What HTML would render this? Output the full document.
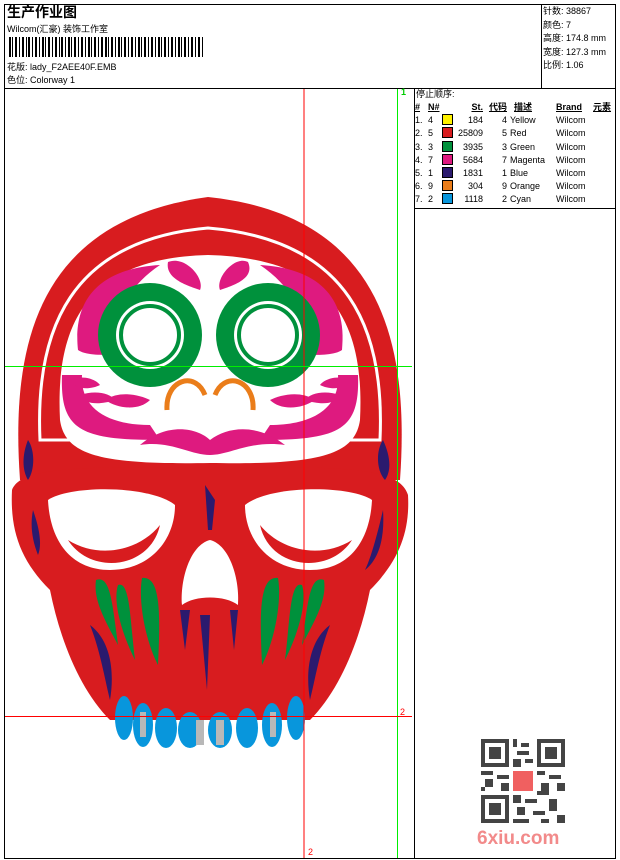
<!DOCTYPE html>
<html><head><meta charset="utf-8"><style>
body{margin:0;width:620px;height:860px;background:#fff;position:relative;font-family:"Liberation Sans","Noto Sans CJK SC",sans-serif;font-size:9px;color:#000;overflow:hidden}
.a{position:absolute}
.b{position:absolute;background:#000}
.t{position:absolute;white-space:nowrap;line-height:12px}
table{border-collapse:collapse;font-size:9px;table-layout:fixed}
td{padding:0;height:13.2px;line-height:13px;white-space:nowrap;overflow:visible}
.sw{display:inline-block;width:9px;height:9px;border:1px solid #000;vertical-align:-2px}
.r{text-align:right}
</style></head><body>
<div class="b" style="left:4px;top:4px;width:612px;height:1px"></div>
<div class="b" style="left:4px;top:858px;width:612px;height:1px"></div>
<div class="b" style="left:4px;top:4px;width:1px;height:855px"></div>
<div class="b" style="left:615px;top:4px;width:1px;height:855px"></div>
<div class="b" style="left:4px;top:88px;width:612px;height:1px"></div>
<div class="b" style="left:541px;top:4px;width:1px;height:84px"></div>
<div class="b" style="left:414px;top:88px;width:1px;height:771px"></div>
<div class="b" style="left:414px;top:208px;width:202px;height:1px"></div>
<div class="t" style="left:7px;top:4px;font-size:14px;font-weight:bold;line-height:16px">生产作业图</div>
<div class="t" style="left:7px;top:23px">Wilcom(汇豪) 装饰工作室</div>
<svg class="a" style="left:9px;top:37px" width="196" height="20">
<g fill="#000">
<rect x="0" width="2" height="20"/><rect x="3" width="1" height="20"/><rect x="6" width="2" height="20"/><rect x="10" width="1" height="20"/><rect x="13" width="2" height="20"/><rect x="17" width="1" height="20"/><rect x="19" width="2" height="20"/><rect x="23" width="1" height="20"/><rect x="26" width="2" height="20"/><rect x="30" width="1" height="20"/><rect x="33" width="2" height="20"/><rect x="36" width="1" height="20"/><rect x="39" width="2" height="20"/><rect x="43" width="1" height="20"/><rect x="46" width="2" height="20"/><rect x="50" width="1" height="20"/><rect x="52" width="2" height="20"/><rect x="56" width="1" height="20"/><rect x="59" width="2" height="20"/><rect x="62" width="1" height="20"/><rect x="65" width="2" height="20"/><rect x="69" width="1" height="20"/><rect x="72" width="2" height="20"/><rect x="76" width="1" height="20"/><rect x="79" width="2" height="20"/><rect x="82" width="1" height="20"/><rect x="85" width="2" height="20"/><rect x="89" width="1" height="20"/><rect x="92" width="2" height="20"/><rect x="96" width="2" height="20"/><rect x="99" width="1" height="20"/><rect x="102" width="2" height="20"/><rect x="106" width="1" height="20"/><rect x="109" width="2" height="20"/><rect x="112" width="1" height="20"/><rect x="115" width="2" height="20"/><rect x="119" width="1" height="20"/><rect x="122" width="2" height="20"/><rect x="126" width="1" height="20"/><rect x="129" width="2" height="20"/><rect x="132" width="1" height="20"/><rect x="135" width="2" height="20"/><rect x="139" width="1" height="20"/><rect x="142" width="2" height="20"/><rect x="146" width="1" height="20"/><rect x="149" width="2" height="20"/><rect x="152" width="1" height="20"/><rect x="155" width="2" height="20"/><rect x="159" width="1" height="20"/><rect x="162" width="2" height="20"/><rect x="166" width="1" height="20"/><rect x="169" width="2" height="20"/><rect x="172" width="1" height="20"/><rect x="175" width="2" height="20"/><rect x="179" width="1" height="20"/><rect x="182" width="2" height="20"/><rect x="186" width="1" height="20"/><rect x="189" width="2" height="20"/><rect x="193" width="1" height="20"/>
</g></svg>
<div class="t" style="left:7px;top:61px">花版: lady_F2AEE40F.EMB</div>
<div class="t" style="left:7px;top:74px">色位: Colorway 1</div>
<div class="t" style="left:543px;top:5px;line-height:13.5px">针数: 38867<br>颜色: 7<br>高度: 174.8 mm<br>宽度: 127.3 mm<br>比例: 1.06</div>

<svg class="a" style="left:5px;top:89px" width="409" height="769" viewBox="5 89 409 769">
<path d="M20 480 C10 340 40 220 208 197 C380 215 410 340 400 480 Z" fill="#d81c1f"/>
<path d="M40 440 C35 330 70 240 208 228 C350 240 385 330 380 440 Z" fill="none" stroke="#fff" stroke-width="3"/>
<path d="M60 420 C55 320 90 258 208 255 C330 258 365 320 360 420 C355 455 320 465 210 463 C100 465 65 455 60 420 Z" fill="#fff"/>
<path d="M78 350 C72 295 105 268 160 265 C130 285 112 315 112 355 C100 355 85 355 78 350 Z" fill="#de1a7f"/>
<path d="M342 350 C348 295 315 268 260 265 C290 285 308 315 308 355 C320 355 335 355 342 350 Z" fill="#de1a7f"/>
<path d="M168 262 C185 255 205 278 200 290 C185 285 165 278 168 262Z" fill="#de1a7f"/>
<path d="M248 262 C235 255 215 278 220 290 C235 285 255 278 248 262Z" fill="#de1a7f"/>
<circle cx="150" cy="335" r="52" fill="#00913c"/><circle cx="150" cy="335" r="34" fill="#fff"/><circle cx="150" cy="335" r="29" fill="none" stroke="#00913c" stroke-width="4"/>
<circle cx="268" cy="335" r="52" fill="#00913c"/><circle cx="268" cy="335" r="34" fill="#fff"/><circle cx="268" cy="335" r="29" fill="none" stroke="#00913c" stroke-width="4"/>
<path d="M62 375 C60 430 80 440 160 440 L150 425 C110 425 80 410 82 375 Z" fill="#de1a7f"/>
<path d="M358 375 C360 430 340 440 260 440 L270 425 C310 425 340 410 338 375 Z" fill="#de1a7f"/>
<path d="M70 380 C80 375 95 378 100 385 C90 390 75 390 70 380Z M80 395 C95 390 110 393 115 400 C100 405 85 405 80 395Z" fill="#de1a7f"/>
<path d="M350 380 C340 375 325 378 320 385 C330 390 345 390 350 380Z M340 395 C325 390 310 393 305 400 C320 405 335 405 340 395Z" fill="#de1a7f"/>
<path d="M105 400 C120 390 140 395 150 400 C140 410 120 410 105 400Z" fill="#de1a7f"/>
<path d="M315 400 C300 390 280 395 270 400 C280 410 300 410 315 400Z" fill="#de1a7f"/>
<path d="M140 445 C170 420 200 430 210 440 C230 425 260 425 285 445 C250 440 230 455 210 455 C190 455 170 440 140 445Z" fill="#de1a7f"/>
<path d="M167 410 C165 380 195 370 205 395" fill="none" stroke="#ea7d1a" stroke-width="5"/>
<path d="M253 410 C255 380 225 370 215 395" fill="none" stroke="#ea7d1a" stroke-width="5"/>
<path d="M12 490 C20 470 60 465 210 468 C360 465 400 470 408 495 C410 530 400 560 370 590 C360 640 340 690 310 720 L110 720 C80 690 60 640 50 590 C20 560 10 530 12 490Z" fill="#d81c1f"/>
<path d="M48 500 C70 485 150 485 175 505 C175 540 150 570 110 570 C70 570 50 540 48 500Z" fill="#fff"/>
<path d="M372 500 C350 485 270 485 245 505 C245 540 270 570 310 570 C350 570 370 540 372 500Z" fill="#fff"/>
<path d="M68 540 C100 560 140 550 160 525 C150 570 90 575 68 540Z" fill="#d81c1f"/>
<path d="M352 540 C320 560 280 550 260 525 C270 570 330 575 352 540Z" fill="#d81c1f"/>
<path d="M210 540 C230 545 240 580 238 605 C225 595 195 595 182 605 C180 580 190 545 210 540Z" fill="#fff"/>
<path d="M28 440 C35 450 35 470 28 480 C22 470 22 455 28 440Z M33 510 C40 530 42 545 38 555 C32 540 30 525 33 510Z" fill="#2b1a6e"/>
<path d="M383 440 C376 450 376 470 385 480 C392 470 390 455 383 440Z M383 510 C376 540 370 560 365 570 C378 560 385 540 383 510Z" fill="#2b1a6e"/>
<path d="M90 625 C110 640 115 670 110 700 C105 680 100 650 90 625Z M330 625 C310 640 305 670 310 700 C315 680 320 650 330 625Z" fill="#2b1a6e"/>
<path d="M180 610 L190 610 L185 650Z M200 615 L210 615 L207 690Z M230 610 L238 610 L234 650Z" fill="#2b1a6e"/>
<path d="M205 485 L215 500 L212 530 L208 530Z" fill="#2b1a6e"/>
<path d="M96 580 C110 575 112 600 118 645 C105 620 93 600 96 580Z M118 585 C130 580 130 620 135 660 C120 630 113 600 118 585Z M142 578 C162 575 160 620 158 665 C145 640 138 600 142 578Z" fill="#00913c"/>
<path d="M324 580 C310 575 308 600 302 645 C315 620 327 600 324 580Z M302 585 C290 580 290 620 285 660 C300 630 307 600 302 585Z M278 578 C258 575 260 620 262 665 C275 640 282 600 278 578Z" fill="#00913c"/>
<g fill="#0896dc">
<ellipse cx="124" cy="718" rx="9" ry="22"/><ellipse cx="143" cy="725" rx="10" ry="22"/><ellipse cx="166" cy="728" rx="11" ry="20"/><ellipse cx="190" cy="730" rx="12" ry="18"/><ellipse cx="220" cy="730" rx="12" ry="18"/><ellipse cx="247" cy="728" rx="11" ry="20"/><ellipse cx="272" cy="725" rx="10" ry="22"/><ellipse cx="296" cy="718" rx="9" ry="22"/>
</g>
<g fill="#b8b8b8"><rect x="140" y="712" width="6" height="25"/><rect x="196" y="720" width="8" height="25"/><rect x="216" y="720" width="8" height="25"/><rect x="270" y="712" width="6" height="25"/></g>
<line x1="304" y1="89" x2="304" y2="858" stroke="#f00" stroke-width="1"/>
<line x1="397.5" y1="89" x2="397.5" y2="858" stroke="#0e0" stroke-width="1"/>
<line x1="5" y1="366.5" x2="412" y2="366.5" stroke="#0e0" stroke-width="1"/>
<line x1="5" y1="716.5" x2="412" y2="716.5" stroke="#f00" stroke-width="1"/>
</svg>
<div class="t" style="left:401px;top:86px;color:#0c0;font-size:9px;font-weight:bold">1</div>
<div class="t" style="left:400px;top:706px;color:#f00">2</div>
<div class="t" style="left:308px;top:846px;color:#f00">2</div>

<div class="t" style="left:416px;top:88px">停止顺序:</div>
<table class="a" style="left:415px;top:101px;width:215px">
<colgroup><col style="width:13px"><col style="width:14px"><col style="width:14px"><col style="width:27px"><col style="width:24px"><col style="width:49px"><col style="width:37px"><col style="width:37px"></colgroup>
<tr style="font-weight:bold;text-decoration:underline"><td>#</td><td>N#</td><td></td><td class="r">St.</td><td class="r">代码</td><td style="padding-left:7px">描述</td><td>Brand</td><td>元素</td></tr>
<tr><td>1.</td><td>4</td><td><span class="sw" style="background:#fff200"></span></td><td class="r">184</td><td class="r">4</td><td style="padding-left:3px">Yellow</td><td>Wilcom</td><td></td></tr>
<tr><td>2.</td><td>5</td><td><span class="sw" style="background:#d81c1f"></span></td><td class="r">25809</td><td class="r">5</td><td style="padding-left:3px">Red</td><td>Wilcom</td><td></td></tr>
<tr><td>3.</td><td>3</td><td><span class="sw" style="background:#00913c"></span></td><td class="r">3935</td><td class="r">3</td><td style="padding-left:3px">Green</td><td>Wilcom</td><td></td></tr>
<tr><td>4.</td><td>7</td><td><span class="sw" style="background:#de1a7f"></span></td><td class="r">5684</td><td class="r">7</td><td style="padding-left:3px">Magenta</td><td>Wilcom</td><td></td></tr>
<tr><td>5.</td><td>1</td><td><span class="sw" style="background:#2b1a6e"></span></td><td class="r">1831</td><td class="r">1</td><td style="padding-left:3px">Blue</td><td>Wilcom</td><td></td></tr>
<tr><td>6.</td><td>9</td><td><span class="sw" style="background:#ea7d1a"></span></td><td class="r">304</td><td class="r">9</td><td style="padding-left:3px">Orange</td><td>Wilcom</td><td></td></tr>
<tr><td>7.</td><td>2</td><td><span class="sw" style="background:#0896dc"></span></td><td class="r">1118</td><td class="r">2</td><td style="padding-left:3px">Cyan</td><td>Wilcom</td><td></td></tr>
</table>

<svg class="a" style="left:481px;top:739px" width="84" height="84" viewBox="0 0 21 21">
<rect width="21" height="21" fill="#fff"/>
<g fill="#444">
<path d="M0 0h7v7h-7zM1 1v5h5v-5zM2 2h3v3h-3z" fill-rule="evenodd"/>
<path d="M14 0h7v7h-7zM15 1v5h5v-5zM16 2h3v3h-3z" fill-rule="evenodd"/>
<path d="M0 14h7v7h-7zM1 15v5h5v-5zM2 16h3v3h-3z" fill-rule="evenodd"/>
<rect x="8" y="0" width="1" height="2"/><rect x="10" y="1" width="2" height="1"/><rect x="9" y="3" width="3" height="1"/><rect x="8" y="5" width="2" height="2"/><rect x="11" y="5" width="2" height="1"/>
<rect x="0" y="8" width="3" height="1"/><rect x="4" y="9" width="3" height="1"/><rect x="1" y="10" width="2" height="2"/><rect x="5" y="11" width="2" height="2"/><rect x="0" y="12" width="1" height="1"/>
<rect x="14" y="8" width="2" height="1"/><rect x="17" y="9" width="3" height="1"/><rect x="15" y="11" width="2" height="2"/><rect x="19" y="11" width="2" height="2"/><rect x="14" y="13" width="3" height="1"/>
<rect x="8" y="14" width="2" height="2"/><rect x="11" y="15" width="3" height="1"/><rect x="9" y="17" width="2" height="2"/><rect x="13" y="18" width="3" height="1"/><rect x="17" y="15" width="2" height="3"/><rect x="19" y="19" width="2" height="2"/><rect x="8" y="20" width="4" height="1"/><rect x="15" y="20" width="2" height="1"/>
</g>
<rect x="8" y="8" width="5" height="5" fill="#f06060"/>
</svg>
<div class="t" style="left:477px;top:828px;font-size:19px;font-weight:bold;color:#f28a8a;line-height:22px">6xiu.com</div>
</body></html>
